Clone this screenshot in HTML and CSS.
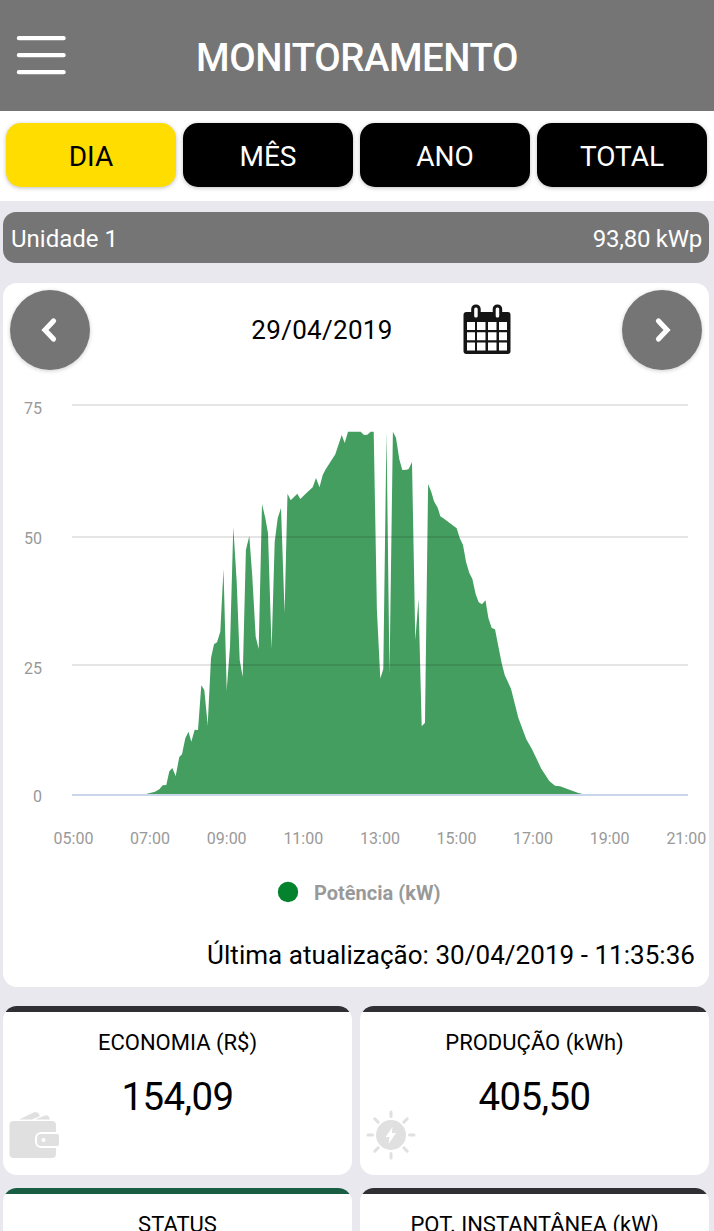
FILE: index.html
```html
<!DOCTYPE html>
<html lang="pt-BR">
<head>
<meta charset="utf-8">
<title>Monitoramento</title>
<link rel="stylesheet" href="styles.css">
</head>
<body>
<header class="header">
  <svg class="menu" width="50" height="40" viewBox="0 0 50 40"><path d="M2.900 3.200H47.600M2.900 20.200H47.600M2.900 37.200H47.600"/></svg>
  <h1 class="title">MONITORAMENTO</h1>
</header>
<nav class="tabs">
  <button class="tab active">DIA</button>
  <button class="tab">MÊS</button>
  <button class="tab">ANO</button>
  <button class="tab">TOTAL</button>
</nav>
<main class="content">
  <section class="unit"><span>Unidade 1</span><span class="power">93,80 kWp</span></section>
  <section class="panel">
    <div class="datebar">
      <button class="round"><svg width="80" height="80" viewBox="0 0 80 80"><path d="M43.500 31L35 40l8.500 9"/></svg></button>
      <span class="date">29/04/2019</span>
      <svg class="calendar" width="48" height="52" viewBox="0 0 48 52">
        <rect x="0.500" y="9" width="47" height="42" rx="3" fill="#151515"/>
        <g fill="#fff">
          <path d="M4 19h8v8H4zM14 19h8.500v8H14zM25 19h8.500v8H25zM36 19h8v8h-8z"/>
          <path d="M4 29.300h8v8H4zM14 29.300h8.500v8H14zM25 29.300h8.500v8H25zM36 29.300h8v8h-8z"/>
          <path d="M4 39.500h8v8H4zM14 39.500h8.500v8H14zM25 39.500h8.500v8H25zM36 39.500h8v8h-8z"/>
        </g>
        <rect x="9.700" y="3" width="6.500" height="13" rx="3" fill="#fff" stroke="#151515" stroke-width="3"/>
        <rect x="31.200" y="3" width="6.500" height="13" rx="3" fill="#fff" stroke="#151515" stroke-width="3"/>
      </svg>
      <button class="round"><svg width="80" height="80" viewBox="0 0 80 80"><path d="M36.500 31L45 40l-8.500 9"/></svg></button>
    </div>
    <svg class="chart" width="706" height="550" viewBox="3 370 706 550">
      <path class="area" d="M145 794.300L155 791.700 159.300 789.300 162.700 785.300 166.300 785 169.300 771.300 172.300 768 175.700 776 179.300 757 182 754.300 185.300 738.300 188.500 731.700 191.300 741.700 194.700 729.700 198 730 201.300 685.300 204.300 690 207.700 725 211 658 214 644.300 217 642.300 220.300 631.700 223.500 569 226.700 690 230 646.700 233.300 527 236.700 581.700 239.700 660 242.700 677 245.900 550 249.300 536 252.300 576.700 255.700 636.700 258.700 649 262 504 265.300 518 268 533.300 271.600 649 274.700 541.700 277.700 518.300 281 508 284.600 613 287.500 493.700 290.700 500.300 297.300 493.700 300.300 499 306.700 492.700 312.700 487.300 316 478 319.500 487.300 322.700 475 325.700 469.300 335.300 454.300 341.700 435 344.700 443 348 431.700 360.700 431.700 364 435 367.300 434.700 370.700 431.700 373.700 431.700 376.900 610 380.300 678.500 383.300 669 386.500 431.700 389.500 674 392.900 431.700 396 437.700 399.300 459.300 402.300 470 406.700 469.700 408.700 469 412 462 415.300 640 418.500 599 421.700 726.300 425 722.700 428.100 484 431.300 492 434 501.300 437.700 507.700 440.300 516.300 444 518.700 456.700 528.300 459.700 538 463 545 466 561.700 469.300 573 472.300 578.700 475.700 594.300 478.700 602.300 482 604.300 485.500 600.300 488.300 617.700 491.700 628 495 629.300 501.700 663.300 504.700 675 511 688.700 518.300 717.700 526.300 739.300 532 749.300 541.300 768.700 549.300 781 555 785.700 560 786.300 578.300 793 584 794.300Z"/>
      <path class="grid" d="M72 405H688M72 537H688M72 665H688"/>
      <path class="base" d="M72 795H688"/>
      <g class="axis" text-anchor="end">
        <text x="42" y="414">75</text><text x="42" y="544">50</text><text x="42" y="674">25</text><text x="42" y="802">0</text>
      </g>
      <g class="axis" text-anchor="middle">
        <text x="73.500" y="844">05:00</text><text x="150" y="844">07:00</text><text x="226.700" y="844">09:00</text><text x="303.300" y="844">11:00</text><text x="380" y="844">13:00</text><text x="456.500" y="844">15:00</text><text x="533" y="844">17:00</text><text x="609.600" y="844">19:00</text><text x="686.300" y="844">21:00</text>
      </g>
      <circle cx="288" cy="892" r="10.200" fill="#04822e"/>
      <text class="legend" x="314" y="900">Potência (kW)</text>
    </svg>
    <p class="updated">Última atualização: 30/04/2019 - 11:35:36</p>
  </section>
  <section class="cards">
    <article class="card">
      <h2 class="card-title">ECONOMIA (R$)</h2>
      <p class="value">154,09</p>
      <svg class="card-icon" width="52" height="50" viewBox="0 0 52 50">
        <g fill="#e0e0e0"><path d="M11 9.500L25.500 2.500q3-1.500 5 1L32 6 24 9.500zM27 9.500L37 5.500q3-1 4 1.500l1 2.500z"/>
        <rect x="1.500" y="11" width="46.500" height="37" rx="4"/></g>
        <rect x="28" y="23" width="26" height="14" rx="5" fill="#e0e0e0" stroke="#fff" stroke-width="2"/>
        <path d="M48 20h4v20h-4z" fill="#fff"/><path d="M47 24h2q2 0 2 2v8q0 2-2 2h-2z" fill="#e0e0e0"/>
        <circle cx="35.500" cy="30" r="2" fill="#fff"/>
      </svg>
    </article>
    <article class="card">
      <h2 class="card-title">PRODUÇÃO (kWh)</h2>
      <p class="value">405,50</p>
      <svg class="card-icon" width="52" height="50" viewBox="0 0 52 50">
        <circle cx="26" cy="25" r="15" fill="#e0e0e0"/>
        <path d="M26 2V6.500M26 43.500V48M3 25H7.500M44.500 25H49M9.800 8.800l3.400 3.400M38.800 12.200l3.400-3.400M9.800 41.200l3.400-3.400M38.800 37.800l3.400 3.400" stroke="#e0e0e0" stroke-width="3" stroke-linecap="round" fill="none"/>
        <path d="M27.500 17L20.500 27h4l-1 7 7.500-11h-4.200z" fill="#fff"/>
      </svg>
    </article>
    <article class="card green"><h2 class="card-title">STATUS</h2></article>
    <article class="card"><h2 class="card-title">POT. INSTANTÂNEA (kW)</h2></article>
  </section>
</main>
</body>
</html>
```
FILE: styles.css
```css
* { box-sizing: border-box; }
html { height: 100%; overflow: hidden; }
body { margin: 0; height: 100%; overflow: hidden; background: #e9e8ee; font-family: Roboto, sans-serif; color: #000; }
h1, h2, p { margin: 0; font-weight: 400; }
button { border: 0; padding: 0; font-family: inherit; }
.header { height: 111px; padding: 4px 16px 0 16px; background: #757575; color: #fff; display: grid; grid-template-columns: 50px 1fr 50px; align-items: center; }
.menu { margin-top: -5px; }
.menu path { stroke: #fff; stroke-width: 4.3; stroke-linecap: round; }
.title { font-size: 38.400px; font-weight: 500; text-align: center; letter-spacing: -.45px; }
.tabs { height: 90px; padding: 12px 7px 14px 6px; display: flex; gap: 7px; background: #fff; }
.tab { flex: 1; border-radius: 15px; background: #000; color: #fff; font-size: 28px; line-height: 33px; padding-top: 3px; box-shadow: 0 1px 4px rgba(0, 0, 0, .25); }
.tab.active { background: #fd0; color: #000; }
.content { padding: 11px 5px 0 3px; }
.unit { height: 51px; padding: 3px 7px 0 8px; display: flex; align-items: center; justify-content: space-between; border-radius: 13px; background: #757575; color: #fff; font-size: 24px; }
.power { letter-spacing: -.25px; }
.panel { height: 704px; margin-top: 20px; background: #fff; border-radius: 14px; }
.datebar { height: 87px; padding: 7px 7px 0; display: flex; align-items: center; }
.round { width: 80px; height: 80px; border-radius: 50%; background: #757575; box-shadow: 0 1px 4px rgba(0, 0, 0, .2); }
.round svg { display: block; }
.round path { fill: none; stroke: #fff; stroke-width: 5.2; stroke-linecap: round; stroke-linejoin: miter; }
.round:last-child { margin-left: auto; }
.date { width: 144px; margin-left: 160px; text-align: center; font-size: 26px; letter-spacing: .3px; white-space: nowrap; }
.calendar { margin: -2px 0 0 68.500px; }
.chart { display: block; }
.area { fill: #439e60; }
.grid { stroke: rgba(0, 0, 0, .1); stroke-width: 2; }
.base { stroke: #ccd6eb; stroke-width: 2; }
.axis { font-size: 16px; fill: #999; }
.legend { font-size: 20px; font-weight: 700; fill: #999; }
.updated { padding: 20px 14px 0 0; text-align: right; font-size: 26px; line-height: 30px; letter-spacing: .04px; }
.cards { margin-top: 19px; display: grid; grid-template-columns: 349px 349px; grid-auto-rows: 169px; gap: 13px 8px; }
.card { background: linear-gradient(#302f33 6px, #fff 6px); border-radius: 14px; display: flex; flex-direction: column; align-items: center; padding-top: 24px; }
.card.green { background: linear-gradient(#195d43 6px, #fff 6px); }
.card-title { font-size: 22px; line-height: 26px; }
.value { margin-top: 18px; font-size: 38.400px; line-height: 45px; letter-spacing: -.6px; }
.card-icon { align-self: flex-start; margin: -9px 0 0 5px; }
```
